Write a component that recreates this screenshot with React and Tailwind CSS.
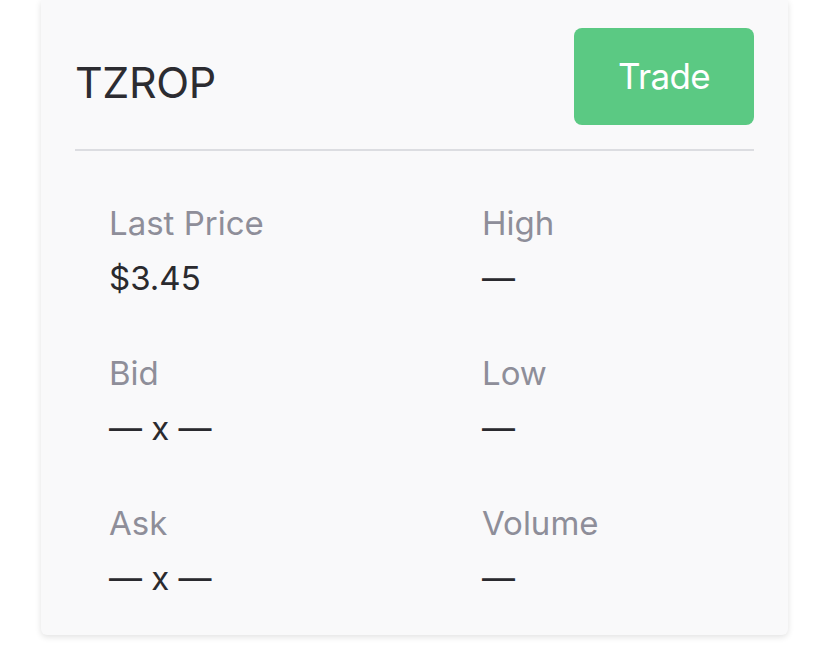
const STATS = [
  { label: 'Last Price', value: '$3.45' },
  { label: 'High', value: '—' },
  { label: 'Bid', value: '— x —' },
  { label: 'Low', value: '—' },
  { label: 'Ask', value: '— x —' },
  { label: 'Volume', value: '—' },
];

export default function App() {
  return (
    <div className="min-h-screen bg-white font-['Inter','Noto_Sans',sans-serif]">
      <div className="ml-[41px] w-[747px] rounded-b-md bg-[#f9f9fa] px-[34px] pb-[37px] shadow-[0_2px_6px_rgba(0,0,0,0.12)]">
        {/* Header */}
        <div className="flex items-start justify-between border-b-2 border-[#dcdde1] pt-[28px] pb-[24px]">
          <h1 className="mt-[33px] text-[43px] leading-[43px] tracking-[-0.01em] text-[#2c2c31]">TZROP</h1>
          <button className="flex h-[97px] w-[180px] items-center justify-center rounded-lg bg-[#5bc983] text-[35px] tracking-[-0.02em] text-white">
            Trade
          </button>
        </div>

        {/* Stats */}
        <div className="grid grid-cols-[373px_1fr] gap-y-[55px] pt-[52px] pl-[34px]">
          {STATS.map((s) => (
            <div key={s.label}>
              <div className="text-[33px] leading-[40px] text-[#8e8e99]">{s.label}</div>
              <div className="mt-[15px] text-[33px] leading-[40px] text-[#2a2a2e]">{s.value}</div>
            </div>
          ))}
        </div>
      </div>
    </div>
  );
}
